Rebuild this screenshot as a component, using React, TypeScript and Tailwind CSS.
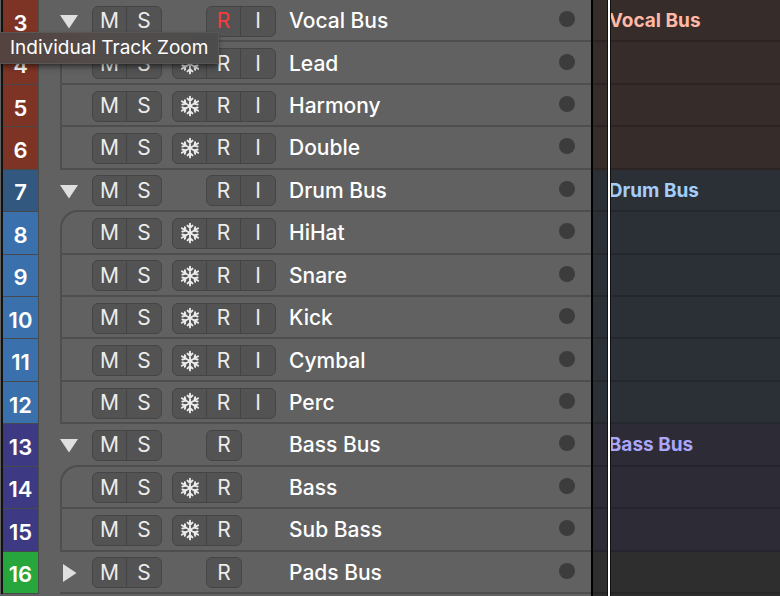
import { useState } from "react";
import clsx from "clsx";

type Track = {
  num: number;
  name: string;
  color: string;
  lane: string;
  label?: string;
  kind: "bus" | "child";
  first?: boolean;
  closed?: boolean;
  input?: boolean;
  armed?: boolean;
};

const vocal = { color: "bg-[#7d3424]", lane: "bg-[#362c2a] border-[#2c2423]" };
const drums = { color: "bg-[#3a70ac]", lane: "bg-[#2b3037] border-[#24282d]" };
const bass = { color: "bg-[#3d3a83]", lane: "bg-[#2c2b36] border-[#25242c]" };

const tracks: Track[] = [
  { ...vocal, num: 3, name: "Vocal Bus", kind: "bus", input: true, armed: true, label: "text-[#ffb8a5]" },
  { ...vocal, num: 4, name: "Lead", kind: "child", first: true, input: true },
  { ...vocal, num: 5, name: "Harmony", kind: "child", input: true },
  { ...vocal, num: 6, name: "Double", kind: "child", input: true },
  { ...drums, num: 7, name: "Drum Bus", kind: "bus", input: true, color: "bg-[#33587f]", label: "text-[#a3cdfb]" },
  { ...drums, num: 8, name: "HiHat", kind: "child", first: true, input: true },
  { ...drums, num: 9, name: "Snare", kind: "child", input: true },
  { ...drums, num: 10, name: "Kick", kind: "child", input: true },
  { ...drums, num: 11, name: "Cymbal", kind: "child", input: true },
  { ...drums, num: 12, name: "Perc", kind: "child", input: true },
  { ...bass, num: 13, name: "Bass Bus", kind: "bus", label: "text-[#aaa6fb]" },
  { ...bass, num: 14, name: "Bass", kind: "child", first: true },
  { ...bass, num: 15, name: "Sub Bass", kind: "child" },
  { num: 16, name: "Pads Bus", kind: "bus", closed: true, color: "bg-[#26a63c]", lane: "bg-[#2e2e2e] border-[#262626]" },
];

function Snowflake() {
  return (
    <svg viewBox="0 0 22 22" className="size-[22px]" fill="none" stroke="currentColor" strokeWidth="1.9" strokeLinecap="round">
      {[0, 60, 120, 180, 240, 300].map((angle) => (
        <path key={angle} d="M11 11V1.6M8.5 3.6L11 6L13.5 3.6" transform={`rotate(${angle} 11 11)`} />
      ))}
    </svg>
  );
}

function Group({ children }: { children: React.ReactNode }) {
  return (
    <div className="flex h-[31px] divide-x divide-[#434343] overflow-hidden rounded-md border border-[#454545] bg-[#535353]">
      {children}
    </div>
  );
}

function Key({ label, on, children }: { label: string; on?: boolean; children: React.ReactNode }) {
  return (
    <button
      type="button"
      aria-label={label}
      className={clsx("flex w-[34px] items-center justify-center text-[21px] leading-7", on ? "text-[#f73c3c]" : "text-[#ececec]")}
    >
      {children}
    </button>
  );
}

function TrackHeader({ track }: { track: Track }) {
  const [closed, setClosed] = useState(!!track.closed);
  const isBus = track.kind === "bus";

  return (
    <div className="flex">
      <div className={clsx("flex w-[35px] items-center justify-center border-b border-[#48494c] pt-1 text-[22px] leading-7 font-semibold", track.color)}>
        {track.num}
      </div>
      <div className="w-[22px] border-l border-[#4b4b4b]" />
      <div
        className={clsx(
          "flex flex-1 items-center border-[#4e4e4e] pt-0.5",
          isBus ? "pl-0.5" : "border-b-2 border-l-2",
          track.closed && "border-b-2",
          isBus && !track.closed && "pb-0.5",
          track.first && "-mt-0.5 rounded-tl-[18px] border-t-2"
        )}
      >
        <div className="flex w-[30px] items-center">
          {isBus && (
            <button type="button" aria-label="Toggle stack" className="-ml-[3px] text-[#dfdfdf]" onClick={() => setClosed(!closed)}>
              <svg viewBox="0 0 20 20" className="size-5" fill="currentColor">
                {closed ? <path d="M4 1L17.5 10L4 19Z" /> : <path d="M1 4H19L10 17.5Z" />}
              </svg>
            </button>
          )}
        </div>
        <Group>
          <Key label="Mute">M</Key>
          <Key label="Solo">S</Key>
        </Group>
        <div className={clsx("flex w-[117px]", isBus ? "pl-11" : "pl-2.5")}>
          <Group>
            {!isBus && (
              <Key label="Freeze">
                <Snowflake />
              </Key>
            )}
            <Key label="Record enable" on={track.armed}>R</Key>
            {track.input && <Key label="Input monitoring">I</Key>}
          </Group>
        </div>
        <div className="flex-1 pl-2.5 text-[21px] leading-7 font-medium">{track.name}</div>
        <span className="mr-4 mb-1 size-4 rounded-full bg-[#3c3c3c]" />
      </div>
    </div>
  );
}

export default function App() {
  return (
    <main className="relative grid min-h-screen grid-cols-[19fr_6fr] bg-[#616161] font-['Inter',sans-serif] text-white">
      <section className="grid auto-rows-fr border-r-2 border-black pb-0.5 pl-px">
        {tracks.map((track) => (
          <div key={track.num} className="grid border-l-2 border-[#111111]">
            <TrackHeader track={track} />
          </div>
        ))}
      </section>

      <section className="relative grid auto-rows-fr bg-[#2e2e2e] pb-0.5">
        {tracks.map((track) => (
          <div key={track.num} className={clsx("flex items-center border-b-2 pt-0.5 pl-4 text-[19px] leading-7 font-bold", track.lane, track.label)}>
            {track.label && track.name}
          </div>
        ))}
        <div className="absolute inset-y-0 left-3.5 w-1 border-x border-[#111111] bg-white" />
      </section>

      <div
        role="tooltip"
        className="absolute top-8 left-0 border border-l-0 border-[#5a5655] bg-linear-to-r from-[#54433f] via-[#514c4b] to-[#4c4c4c] py-px pr-2.5 pl-2.5 text-[19px] leading-7 shadow-md shadow-black/40"
      >
        Individual Track Zoom
      </div>
    </main>
  );
}
